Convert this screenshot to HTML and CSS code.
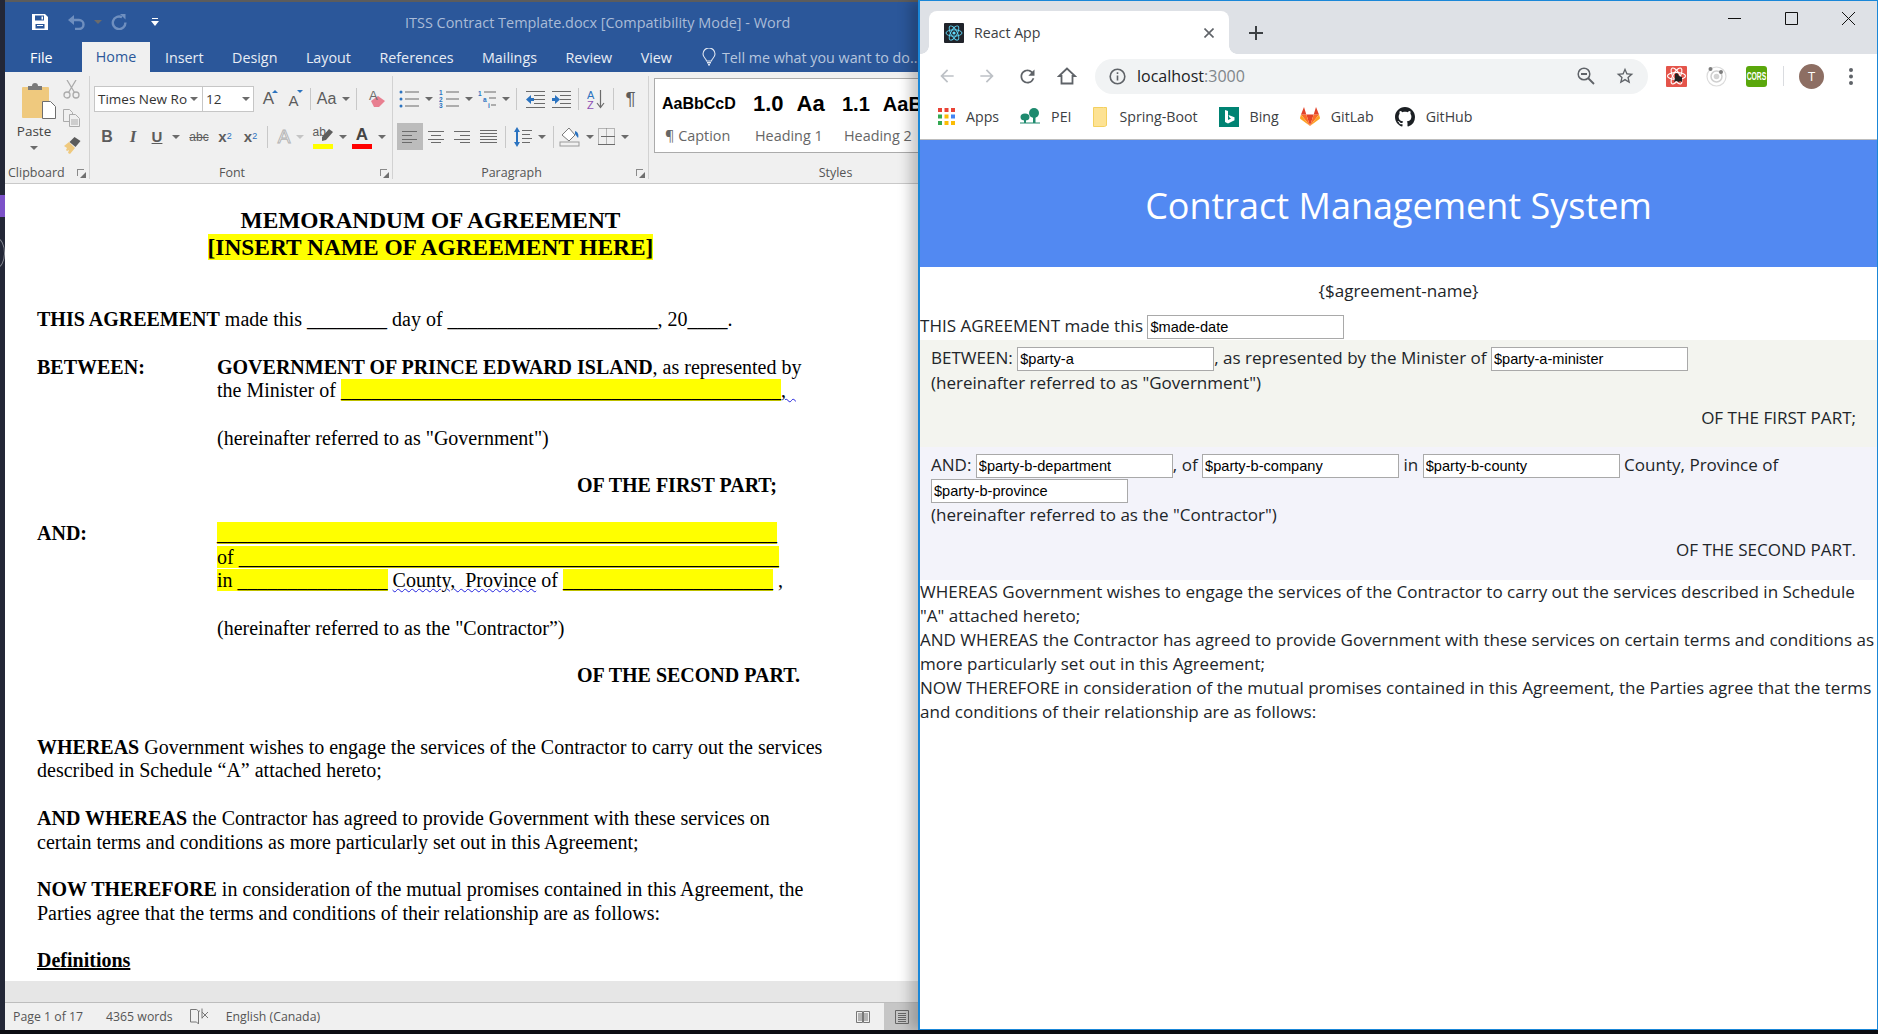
FILE: index.html
```html
<!DOCTYPE html>
<html>
  <head>
    <meta charset="UTF-8" />
    <title>Contract Management System</title>
    <link rel="stylesheet" href="styles.css">
  </head>

  <body>
    <div class="desk-mark mark-a"></div>
    <div class="desk-mark mark-b"></div>
    <div class="desk-arc"></div>

    <!-- Word window -->
    <div class="word">
      <div class="word-title">
        <div class="quick">
          <svg class="q-save" width="16" height="16" viewBox="0 0 16 16"><path fill="#fff" d="M0 0h13l3 3v13H0z"/><path fill="#2b579a" d="M3 1.5h9v5H3zM3.5 10h9v4.5h-9z"/><path fill="#fff" d="M9.5 2.5h1.5v3H9.5zM5 11h6v1H5z"/></svg>
          <svg class="q-undo" width="18" height="15" viewBox="0 0 18 15"><path fill="none" stroke="#6f8fbf" stroke-width="2.4" d="M2 5h9a4.5 4.5 0 0 1 0 9H7"/><path fill="#6f8fbf" d="M6 0v10L0 5z"/></svg>
          <span class="caret q-caret"></span>
          <svg class="q-redo" width="17" height="16" viewBox="0 0 17 16"><path fill="none" stroke="#6f8fbf" stroke-width="2.4" d="M11 3.2a6.3 6.3 0 1 0 3.4 5.3"/><path fill="#6f8fbf" d="M9 0l5.500 0v5.500z"/></svg>
          <svg class="q-more" width="8" height="9" viewBox="0 0 8 9"><path fill="#fff" d="M1 0h6v1H1zM0 3h8L4 8z"/></svg>
        </div>
        <div class="doc-name">ITSS Contract Template.docx [Compatibility Mode] - Word</div>
      </div>
      <div class="word-tabs">
        <span class="tab-file">File</span>
        <span class="tab-home">Home</span>
        <span class="wtab t-ins">Insert</span>
        <span class="wtab">Design</span>
        <span class="wtab">Layout</span>
        <span class="wtab">References</span>
        <span class="wtab">Mailings</span>
        <span class="wtab">Review</span>
        <span class="wtab">View</span>
        <svg class="bulb" width="14" height="18" viewBox="0 0 14 18"><path fill="none" stroke="#dfe6f1" stroke-width="1.100" d="M4.500 13c0-2-3.500-3.500-3.500-7a6 6 0 0 1 12 0c0 3.500-3.500 5-3.500 7z"/><path fill="#dfe6f1" d="M5 14h4v1.500H5zM6 16h2v1.500H6z"/></svg>
        <span class="tell">Tell me what you want to do...</span>
      </div>

      <div class="ribbon">
        <div class="group g-clip">
          <div class="clip-body">
            <div class="paste">
              <svg width="34" height="36" viewBox="0 0 34 36"><rect x="0" y="4" width="27" height="31" rx="1" fill="#efc97e"/><path fill="#7a7a7a" d="M6 3h4a3 3 0 0 1 6 0h4v4H6z"/><path fill="#fff" stroke="#6e6e6e" d="M20.500 18.500h8l5 5v12h-13z"/></svg>
              <span class="paste-label">Paste</span>
              <span class="caret"></span>
            </div>
            <div class="clip-tools">
              <svg width="17" height="19" viewBox="0 0 17 19"><g fill="none" stroke="#ababab" stroke-width="1.300"><circle cx="4" cy="15" r="3"/><circle cx="13" cy="15" r="3"/><path d="M5.500 12.500L13 0M11.500 12.500L4 0"/></g></svg>
              <svg width="17" height="18" viewBox="0 0 17 18"><g fill="#f0f0f0" stroke="#ababab"><path d="M.5.5h6l3 3v9H.5z"/><path d="M6.500 5.500h6l4 4v8h-10z"/></g><path stroke="#ababab" d="M8 11h7M8 13h7M8 15h7"/></svg>
              <svg width="18" height="17" viewBox="0 0 18 17"><path fill="#efc97e" d="M1 9l5-4 6 6-5 6-2-1 1-3-2 1-1-1 1-2z"/><path fill="#5b5b5b" d="M6.500 5l5-5 6 4-5 6z"/></svg>
            </div>
          </div>
          <div class="g-label l-clip">Clipboard<span class="launcher"></span></div>
        </div>

        <div class="group g-font">
          <div class="tool-row">
            <div class="combo c-face"><span class="combo-text">Times New Ro</span><span class="caret"></span></div>
            <div class="combo c-size"><span class="combo-text">12</span><span class="caret"></span></div>
            <div class="tool w25 ml2"><span class="big-a">A</span><span class="up-tip"></span></div>
            <div class="tool w25"><span class="small-a">A</span><span class="down-tip"></span></div>
            <span class="rsep"></span>
            <div class="tool w37"><span class="case">Aa</span><span class="caret"></span></div>
            <span class="rsep"></span>
            <div class="tool w32">
              <svg width="18" height="20" viewBox="0 0 18 20"><path fill="#e87f90" d="M3 12l7-5 7 5-6 6H6z"/><text x="1" y="11" font-family="'Liberation Sans',sans-serif" font-size="13" fill="#6b6b6b">A</text></svg>
            </div>
          </div>
          <div class="tool-row r2">
            <div class="tool w26 fb ml4">B</div>
            <div class="tool w26 fi">I</div>
            <div class="tool w40"><span class="fu">U</span><span class="caret"></span></div>
            <div class="tool w26 fs">abc</div>
            <div class="tool w26 fx">x<sub>2</sub></div>
            <div class="tool w25 fx">x<sup>2</sup></div>
            <span class="rsep"></span>
            <div class="tool w38"><span class="fa-glow">A</span><span class="caret pale"></span></div>
            <div class="tool w39">
              <span class="bar-letter"><span class="hl-ab">ab</span><svg class="pen" width="13" height="13" viewBox="0 0 13 13"><path fill="#5e5e5e" d="M9 0l4 3-7 8-4 1 0-4z"/></svg><span class="bar yellow"></span></span><span class="caret"></span>
            </div>
            <div class="tool w40">
              <span class="bar-letter"><span class="col-a">A</span><span class="bar red"></span></span><span class="caret"></span>
            </div>
          </div>
          <div class="g-label">Font<span class="launcher"></span></div>
        </div>

        <div class="group g-para">
          <div class="tool-row">
            <div class="tool w40 ml3">
              <svg width="20" height="18" viewBox="0 0 20 18"><g fill="#2b73c0"><circle cx="2" cy="2" r="1.500"/><circle cx="2" cy="9" r="1.500"/><circle cx="2" cy="16" r="1.500"/></g><path stroke="#6b6b6b" d="M6 2h14M6 9h14M6 16h14"/></svg><span class="caret"></span>
            </div>
            <div class="tool w39">
              <svg width="20" height="18" viewBox="0 0 20 18"><g fill="#2b73c0" font-family="'Liberation Sans',sans-serif" font-size="6.500" font-weight="700"><text x="0" y="5">1</text><text x="0" y="12">2</text><text x="0" y="18">3</text></g><path stroke="#6b6b6b" d="M7 2h13M7 9h13M7 16h13"/></svg><span class="caret"></span>
            </div>
            <div class="tool w37">
              <svg width="18" height="18" viewBox="0 0 18 18"><g fill="#2b73c0" font-family="'Liberation Sans',sans-serif" font-weight="700"><text x="0" y="6" font-size="6.500">1</text><text x="5" y="12" font-size="6.500">a</text><text x="10" y="18" font-size="6.500">i</text></g><path stroke="#6b6b6b" d="M6 2h12M11 8h7M13 15h5"/></svg><span class="caret"></span>
            </div>
            <span class="rsep"></span>
            <div class="tool w26 ml1">
              <svg width="19" height="17" viewBox="0 0 19 17"><path stroke="#6b6b6b" d="M0 .5h19M8 4.500h11M8 8.500h11M8 12.500h11M0 16.500h19"/><path fill="#2b73c0" d="M0 8.500l5-4.500v3h3v3H5v3z"/></svg>
            </div>
            <div class="tool w26">
              <svg width="19" height="17" viewBox="0 0 19 17"><path stroke="#6b6b6b" d="M0 .5h19M8 4.500h11M8 8.500h11M8 12.500h11M0 16.500h19"/><path fill="#2b73c0" d="M8 8.500L3 4v3H0v3h3v3z"/></svg>
            </div>
            <span class="rsep"></span>
            <div class="tool w26">
              <svg width="18" height="20" viewBox="0 0 18 20"><text x="0" y="9.500" font-family="'Liberation Sans',sans-serif" font-size="11" fill="#2b73c0">A</text><text x="0" y="20" font-family="'Liberation Sans',sans-serif" font-size="11" fill="#8d4fb4">Z</text><path fill="none" stroke="#6b6b6b" stroke-width="1.200" d="M13.500 1v17M10 14l3.500 4.500L17 14"/></svg>
            </div>
            <span class="rsep"></span>
            <div class="tool w25 pilcrow">¶</div>
          </div>
          <div class="tool-row r2">
            <div class="tool align on ml4"><svg width="16" height="12" viewBox="0 0 16 12"><path stroke="#6b6b6b" d="M0 .5h15M0 4.500h10M0 8.500h15M0 11.500h10"/></svg></div>
            <div class="tool align"><svg width="16" height="12" viewBox="0 0 16 12"><path stroke="#6b6b6b" d="M0 .5h16M3 4.500h10M0 8.500h16M3 11.500h10"/></svg></div>
            <div class="tool align"><svg width="16" height="12" viewBox="0 0 16 12"><path stroke="#6b6b6b" d="M0 .5h16M6 4.500h10M0 8.500h16M6 11.500h10"/></svg></div>
            <div class="tool w26"><svg width="17" height="13" viewBox="0 0 17 13"><path stroke="#6b6b6b" d="M0 .5h17M0 3.500h17M0 6.500h17M0 9.500h17M0 12.500h17"/></svg></div>
            <span class="rsep"></span>
            <div class="tool w39">
              <svg width="18" height="20" viewBox="0 0 18 20"><path fill="#2b73c0" d="M3 0l3 5H4v10h2l-3 5-3-5h2V5H0z"/><path stroke="#6b6b6b" d="M8 3.500h10M8 7.500h8M8 11.500h10M8 15.500h8"/></svg><span class="caret"></span>
            </div>
            <span class="rsep"></span>
            <div class="tool w37">
              <svg width="21" height="21" viewBox="0 0 21 21"><path fill="#fff" stroke="#7a7a7a" d="M3 9l7-7 6 7-6 6z"/><path fill="#2b73c0" d="M16 5c3 1 4 4 3 7l-3-4z"/><rect x="1" y="16" width="19" height="4" fill="#f0f0f0" stroke="#9a9a9a"/></svg><span class="caret"></span>
            </div>
            <div class="tool w37">
              <svg width="17" height="17" viewBox="0 0 17 17"><path fill="none" stroke="#7a7a7a" stroke-dasharray="1 1" d="M.5.5h16v16H.5zM8.500 .5v16"/><path stroke="#6b6b6b" d="M0 16.500h17M3 8.500h14"/></svg><span class="caret"></span>
            </div>
          </div>
          <div class="g-label">Paragraph<span class="launcher"></span></div>
        </div>

        <div class="group g-styles">
          <div class="gallery">
            <div class="style-cell s1"><div class="sample s-cap">AaBbCcD</div><div class="s-name">¶ Caption</div></div>
            <div class="style-cell s2"><div class="sample s-h1"><span>1.0</span><span>Aa</span></div><div class="s-name">Heading 1</div></div>
            <div class="style-cell s3"><div class="sample s-h2"><span>1.1</span><span>AaB</span></div><div class="s-name">Heading 2</div></div>
          </div>
          <div class="g-label">Styles</div>
        </div>
      </div>

      <div class="doc">
        <h1 class="doc-head">MEMORANDUM OF AGREEMENT<br><mark>[INSERT NAME OF AGREEMENT HERE]</mark></h1>
        <p class="para first"><b>THIS AGREEMENT</b> made this ________ day of _____________________, 20____.</p>
        <div class="para clause">
          <b>BETWEEN:</b>
          <div><b>GOVERNMENT OF PRINCE EDWARD ISLAND</b>, as represented by<br>the Minister of <mark>____________________________________________</mark><span class="wavy">,&nbsp;&nbsp;</span></div>
        </div>
        <div class="para clause"><span></span><div>(hereinafter referred to as "Government")</div></div>
        <p class="para part"><b>OF THE FIRST PART;</b></p>
        <div class="para clause">
          <b>AND:</b>
          <div><mark>________________________________________________________</mark><br><mark>of ______________________________________________________</mark><br><mark>in _______________</mark> <span class="squig">County,  Province</span> of <mark>_____________________</mark> ,</div>
        </div>
        <div class="para clause"><span></span><div>(hereinafter referred to as the "Contractor”)</div></div>
        <p class="para part gap"><b>OF THE SECOND PART.</b></p>
        <p class="para"><b>WHEREAS</b> Government wishes to engage the services of the Contractor to carry out the services<br>described in Schedule “A” attached hereto;</p>
        <p class="para"><b>AND WHEREAS</b> the Contractor has agreed to provide Government with these services on<br>certain terms and conditions as more particularly set out in this Agreement;</p>
        <p class="para"><b>NOW THEREFORE</b> in consideration of the mutual promises contained in this Agreement, the<br>Parties agree that the terms and conditions of their relationship are as follows:</p>
        <p class="para"><b class="defs">Definitions</b></p>
      </div>

      <div class="doc-foot"></div>

      <div class="status">
        <span class="st-page">Page 1 of 17</span>
        <span class="st-words">4365 words</span>
        <svg class="st-book" width="18" height="17" viewBox="0 0 18 17"><path fill="none" stroke="#777" d="M.5 1.500h6l2 1.500v13l-2-2h-6zM9 3h1M12 .5v10M12 4l3 3 3-3M12 4l6 6M18 4l-6 6"/></svg>
        <span class="st-lang">English (Canada)</span>
        <svg class="st-read" width="14" height="14" viewBox="0 0 14 14"><path fill="none" stroke="#777" d="M.5 1.500h6v11h-6zM7.500 1.500h6v11h-6z"/><path stroke="#777" d="M2 4h4M2 6h4M2 8h4M2 10h4M8 4h4M8 6h4M8 8h4M8 10h4"/></svg>
        <span class="st-print"><svg width="14" height="14" viewBox="0 0 14 14"><path fill="none" stroke="#666" d="M.5 .5h13v13H.5z"/><path stroke="#666" d="M3 3.500h8M3 5.500h8M3 7.500h8M3 9.500h8M3 11.500h8"/></svg></span>
      </div>
    </div>

    <!-- Chrome window -->
    <div class="chrome">
      <div class="tabstrip">
        <div class="tab">
          <svg class="favicon" width="20" height="20" viewBox="0 0 20 20"><rect width="20" height="20" rx="1" fill="#20232a"/><g fill="none" stroke="#61dafb" stroke-width=".9"><ellipse cx="10" cy="10" rx="8" ry="3.200"/><ellipse cx="10" cy="10" rx="8" ry="3.200" transform="rotate(60 10 10)"/><ellipse cx="10" cy="10" rx="8" ry="3.200" transform="rotate(120 10 10)"/></g><circle cx="10" cy="10" r="1.600" fill="#61dafb"/></svg>
          <span class="tab-title">React App</span>
          <svg class="tab-x" width="10" height="10" viewBox="0 0 10 10"><path stroke="#5f6368" stroke-width="1.600" d="M.5.5l9 9M9.500.5l-9 9"/></svg>
        </div>
        <svg class="tab-new" width="14" height="14" viewBox="0 0 14 14"><path stroke="#3c4043" stroke-width="2" d="M7 0v14M0 7h14"/></svg>
        <div class="win-btns">
          <span class="win-btn"><svg width="14" height="14" viewBox="0 0 14 14"><path stroke="#111" d="M0 6.500h13"/></svg></span>
          <span class="win-btn"><svg width="14" height="14" viewBox="0 0 14 14"><path fill="none" stroke="#111" d="M.5.500h12v12H.5z"/></svg></span>
          <span class="win-btn"><svg width="14" height="14" viewBox="0 0 14 14"><path stroke="#111" d="M0 0l13 13M13 0L0 13"/></svg></span>
        </div>
      </div>

      <div class="toolbar">
        <span class="nav first-nav"><svg width="20" height="20" viewBox="0 0 24 24"><path fill="#bdc1c6" d="M20 11H7.830l5.590-5.590L12 4l-8 8 8 8 1.410-1.410L7.830 13H20z"/></svg></span>
        <span class="nav"><svg width="20" height="20" viewBox="0 0 24 24"><path fill="#bdc1c6" d="M12 4l-1.410 1.410L16.170 11H4v2h12.170l-5.580 5.590L12 20l8-8z"/></svg></span>
        <span class="nav"><svg width="21" height="21" viewBox="0 0 24 24"><path fill="#5f6368" d="M17.650 6.350A7.958 7.958 0 0 0 12 4c-4.420 0-7.990 3.580-7.990 8s3.570 8 7.990 8c3.730 0 6.840-2.550 7.730-6h-2.080A5.990 5.990 0 0 1 12 18c-3.310 0-6-2.690-6-6s2.690-6 6-6c1.660 0 3.140.69 4.220 1.780L13 11h7V4l-2.350 2.350z"/></svg></span>
        <span class="nav"><svg width="20" height="20" viewBox="0 0 20 20"><path fill="none" stroke="#5f6368" stroke-width="1.800" d="M10 2.500L2 10h2.500v7.500h11V10H18z"/></svg></span>
        <div class="omni">
          <svg class="omni-info" width="17" height="17" viewBox="0 0 17 17"><circle cx="8.500" cy="8.500" r="7.300" fill="none" stroke="#5f6368" stroke-width="1.600"/><path fill="#5f6368" d="M7.700 7.500h1.600v5H7.700zM7.700 4.300h1.600V6H7.700z"/></svg>
          <span class="omni-url">localhost<span class="port">:3000</span></span>
          <svg class="omni-zoom" width="18" height="18" viewBox="0 0 18 18"><circle cx="7" cy="7" r="5.800" fill="none" stroke="#5f6368" stroke-width="1.500"/><path stroke="#5f6368" stroke-width="1.800" d="M11 11l6 6M4 7h6"/></svg>
          <svg class="omni-star" width="20" height="20" viewBox="0 0 24 24"><path fill="#5f6368" d="M22 9.240l-7.190-.62L12 2 9.190 8.630 2 9.240l5.460 4.730L5.820 21 12 17.270 18.180 21l-1.630-7.030L22 9.240zM12 15.400l-3.760 2.270 1-4.280-3.320-2.880 4.380-.38L12 6.100l1.710 4.040 4.380.38-3.320 2.880 1 4.280L12 15.400z"/></svg>
        </div>
        <span class="ext ext-first"><svg width="21" height="21" viewBox="0 0 21 21"><rect width="21" height="21" rx="1" fill="#e4544a"/><g fill="none" stroke="#fff" stroke-width="1.100"><ellipse cx="10.500" cy="10" rx="9" ry="3.500"/><ellipse cx="10.500" cy="10" rx="9" ry="3.500" transform="rotate(60 10.500 10)"/><ellipse cx="10.500" cy="10" rx="9" ry="3.500" transform="rotate(120 10.500 10)"/></g><path fill="#222" d="M9 8a2 2 0 0 1 3 0l1 2 3 1v5l-2-1-1 1-3-1-2 1 1-4z"/></svg></span>
        <span class="ext"><svg width="21" height="21" viewBox="0 0 21 21"><g fill="none"><circle cx="10.500" cy="10.500" r="9.500" stroke="#dcdcdc" stroke-width="1.200"/><circle cx="10.500" cy="10.500" r="5.500" stroke="#d0d0d0" stroke-width="1.500"/></g><circle cx="10.500" cy="10.500" r="2.800" fill="#d4d4d4"/><circle cx="4.500" cy="3" r="2" fill="#7d7d7d"/><circle cx="15" cy="6" r="2" fill="#7d7d7d"/></svg></span>
        <span class="ext"><span class="cors"><span class="cors-text">CORS</span></span></span>
        <span class="tool-sep"></span>
        <span class="avatar">T</span>
        <svg class="dots" width="4" height="18" viewBox="0 0 4 18"><g fill="#5f6368"><circle cx="2" cy="3" r="2"/><circle cx="2" cy="9.500" r="2"/><circle cx="2" cy="16" r="2"/></g></svg>
      </div>

      <div class="bookmarks">
        <span class="bm">
          <svg width="17" height="17" viewBox="0 0 17 17"><g fill="#ea4335"><rect width="4" height="4"/><rect x="6.500" width="4" height="4"/><rect x="13" width="4" height="4"/></g><g fill="#34a853"><rect y="6.500" width="4" height="4"/></g><rect x="6.500" y="6.500" width="4" height="4" fill="#fbbc04"/><rect x="13" y="6.500" width="4" height="4" fill="#4285f4"/><rect y="13" width="4" height="4" fill="#34a853"/><rect x="6.500" y="13" width="4" height="4" fill="#fbbc04"/><rect x="13" y="13" width="4" height="4" fill="#fbbc04"/></svg>
          Apps
        </span>
        <span class="bm">
          <svg width="20" height="17" viewBox="0 0 20 17"><g fill="#1e8a6e"><circle cx="14" cy="5" r="5"/><rect x="13" y="8" width="2.500" height="7"/><ellipse cx="5" cy="9" rx="4.500" ry="3.500"/><rect x="4" y="11" width="2" height="4"/><rect y="14" width="20" height="2" opacity=".5"/></g></svg>
          PEI
        </span>
        <span class="bm">
          <svg width="16" height="20" viewBox="0 0 16 20"><path fill="#fde293" stroke="#f3d060" d="M1.500.5h10l3 0v18l-2 1h-11z"/></svg>
          Spring-Boot
        </span>
        <span class="bm">
          <svg width="20" height="20" viewBox="0 0 20 20"><rect width="20" height="20" fill="#008373"/><path fill="#fff" d="M6 3l3 1v9l3-1.600-1.500-.8-1-2.600 6 2.200v3L9 16.500l-3-1.500z"/></svg>
          Bing
        </span>
        <span class="bm">
          <svg width="20" height="19" viewBox="0 0 20 19"><path fill="#e24329" d="M10 19l3.700-11.500H6.300z"/><path fill="#fc6d26" d="M10 19L6.300 7.500H1zM10 19l3.700-11.500H19z"/><path fill="#fca326" d="M1 7.500L0 11c0 .5.200.8.500 1L10 19zM19 7.500l1 3.500c0 .5-.2.8-.5 1L10 19z"/><path fill="#e24329" d="M1 7.500h5.300L4 0zM19 7.500h-5.300L16 0z"/></svg>
          GitLab
        </span>
        <span class="bm">
          <svg width="20" height="20" viewBox="0 0 16 16"><path fill="#1b1f23" d="M8 0C3.580 0 0 3.580 0 8c0 3.540 2.290 6.530 5.470 7.590.4.070.55-.17.55-.38 0-.19-.01-.82-.01-1.490-2.010.37-2.530-.49-2.690-.94-.09-.23-.48-.94-.82-1.130-.28-.15-.68-.52-.01-.53.63-.01 1.080.58 1.230.82.72 1.210 1.870.87 2.330.66.07-.52.28-.87.51-1.070-1.780-.2-3.640-.89-3.640-3.950 0-.87.31-1.590.82-2.150-.08-.2-.36-1.020.08-2.120 0 0 .67-.21 2.200.82.64-.18 1.320-.27 2-.27.68 0 1.360.09 2 .27 1.530-1.040 2.200-.82 2.200-.82.44 1.100.16 1.920.08 2.120.51.56.82 1.270.82 2.150 0 3.070-1.870 3.750-3.650 3.950.29.25.54.73.54 1.480 0 1.070-.01 1.930-.01 2.200 0 .21.15.46.55.38A8.013 8.013 0 0 0 16 8c0-4.420-3.580-8-8-8z"/></svg>
          GitHub
        </span>
      </div>

      <div class="app">
        <header class="app-header">Contract Management System</header>
        <div class="agreement-name">{$agreement-name}</div>
        <div class="made">THIS AGREEMENT made this <input class="field" value="$made-date"></div>
        <section class="party party-a">
          <div class="line">BETWEEN: <input class="field" value="$party-a">, as represented by the Minister of <input class="field" value="$party-a-minister"></div>
          <div class="refer">(hereinafter referred to as "Government")</div>
          <p class="part-end">OF THE FIRST PART;</p>
        </section>
        <section class="party party-b">
          <div class="line">AND: <input class="field" value="$party-b-department">, of <input class="field" value="$party-b-company"> in <input class="field" value="$party-b-county"> County, Province of</div>
          <div class="line second"><input class="field" value="$party-b-province"></div>
          <div class="refer">(hereinafter referred to as the "Contractor")</div>
          <p class="part-end">OF THE SECOND PART.</p>
        </section>
        <div class="recitals">
          WHEREAS Government wishes to engage the services of the Contractor to carry out the services described in Schedule<br>
          "A" attached hereto;<br>
          AND WHEREAS the Contractor has agreed to provide Government with these services on certain terms and conditions as<br>
          more particularly set out in this Agreement;<br>
          NOW THEREFORE in consideration of the mutual promises contained in this Agreement, the Parties agree that the terms<br>
          and conditions of their relationship are as follows:
        </div>
      </div>
    </div>
  </body>
</html>
```

FILE: styles.css
```css
html,
body {
  margin: 0;
  padding: 0;
  height: 100%;
}

body {
  position: relative;
  width: 1878px;
  height: 1034px;
  overflow: hidden;
  background: #0c0d12;
  font-family: "Open Sans", sans-serif;
}

.desk-mark {
  position: absolute;
  left: 0;
  width: 5px;
  background: #232737;
}

.mark-a {
  top: 0;
  height: 195px;
}

.mark-b {
  top: 195px;
  height: 835px;
  background: linear-gradient(#7c52c8 0 22px, #232737 22px);
}

.desk-arc {
  position: absolute;
  left: -14px;
  top: 238px;
  width: 14px;
  height: 28px;
  border: 1px solid #8a8d96;
  border-radius: 50%;
  transform: translateX(3px);
}

/* word */
.word {
  position: absolute;
  left: 5px;
  top: 0;
  width: 914px;
  height: 1030px;
  border-top: 2px solid #5c5c5c;
  box-sizing: border-box;
  display: flex;
  flex-direction: column;
  overflow: hidden;
}

.word-title {
  height: 40px;
  background: #2b579a;
  display: flex;
  align-items: center;
  flex: none;
}

.quick {
  width: 400px;
  display: flex;
  align-items: center;
  flex: none;
}

.q-save {
  margin-left: 27px;
}

.q-undo {
  margin-left: 20px;
}

.q-caret {
  margin-left: 8px;
  border-top-color: #6f8fbf;
}

.q-redo {
  margin-left: 9px;
}

.q-more {
  margin-left: 23px;
}

.doc-name {
  color: #aabcd8;
  font-size: 14.45px;
  white-space: nowrap;
}

.word-tabs {
  height: 30px;
  background: #2b579a;
  display: flex;
  align-items: center;
  color: #e8edf5;
  font-size: 14.3px;
  flex: none;
  white-space: nowrap;
}

.word-tabs > * {
  flex: none;
}

.tab-file {
  margin-left: 25px;
  width: 52px;
  color: #fff;
}

.tab-home {
  width: 68px;
  height: 30px;
  line-height: 30px;
  text-align: center;
  background: #f0f0f0;
  color: #2b579a;
}

.wtab {
  margin-left: 28.5px;
}

.t-ins {
  margin-left: 15px;
}

.bulb {
  margin-left: 30px;
}

.tell {
  margin-left: 6px;
  color: #b7c6de;
}

.ribbon {
  height: 111px;
  background: #f0f0f0;
  border-bottom: 1px solid #c9c9c9;
  display: flex;
  flex: none;
}

.group {
  position: relative;
  height: 103px;
  margin-top: 4px;
  border-right: 1px solid #d2d2d2;
  flex: none;
}

.g-clip {
  width: 84px;
}

.g-font {
  width: 302px;
}

.g-para {
  width: 255px;
}

.g-styles {
  width: 269px;
  border-right: none;
}

.g-label {
  position: absolute;
  left: 0;
  right: 0;
  bottom: -4px;
  height: 20px;
  padding-right: 18px;
  line-height: 20px;
  text-align: center;
  font-size: 12.5px;
  color: #555;
}

.g-styles .g-label {
  padding: 0 0 0 104px;
}

.l-clip {
  padding-right: 0;
  text-align: left;
  padding-left: 3px;
}

.launcher {
  position: absolute;
  right: 5px;
  top: 6px;
  width: 6px;
  height: 6px;
  border: 1px solid #8a8a8a;
  border-width: 1px 0 0 1px;
}

.launcher::after {
  content: "";
  position: absolute;
  right: -2px;
  bottom: -2px;
  border: 3px solid transparent;
  border-right-color: #6f6f6f;
  border-bottom-color: #6f6f6f;
}

.caret {
  display: inline-block;
  width: 0;
  height: 0;
  border: 4px solid transparent;
  border-top: 4px solid #6b6b6b;
  border-bottom: 0;
  flex: none;
}

.caret.pale {
  border-top-color: #c4c4c4;
}

/* clipboard */
.clip-body {
  display: flex;
}

.paste {
  width: 52px;
  margin-left: 3px;
  padding-top: 7px;
  display: flex;
  flex-direction: column;
  align-items: center;
  font-size: 13.5px;
  color: #444;
}

.paste svg {
  margin-left: 9px;
}

.paste-label {
  margin-top: 1px;
  height: 26px;
  line-height: 22px;
}

.clip-tools {
  padding-top: 4px;
  margin-left: 3px;
  display: flex;
  flex-direction: column;
  gap: 10px;
}

/* tools */
.tool-row {
  display: flex;
  align-items: center;
  height: 26px;
  margin-top: 10px;
}

.r2 {
  height: 27px;
  margin-top: 11px;
}

.combo {
  height: 26px;
  box-sizing: border-box;
  background: #fff;
  border: 1px solid #c6c6c6;
  display: flex;
  align-items: center;
  flex: none;
  font-size: 13.5px;
  color: #333;
  white-space: nowrap;
  overflow: hidden;
}

.c-face {
  width: 108px;
  margin-left: 4px;
  border-right: none;
}

.c-face .combo-text {
  width: 90px;
  padding-left: 3px;
}

.c-face .caret {
  margin-left: 2px;
}

.c-size {
  width: 52px;
}

.c-size .combo-text {
  width: 36px;
  padding-left: 3px;
}

.tool {
  height: 100%;
  display: flex;
  align-items: center;
  justify-content: center;
  gap: 6px;
  flex: none;
  box-sizing: border-box;
  position: relative;
  color: #5c5c5c;
  font-family: "Liberation Sans", sans-serif;
}

.w25 { width: 25px; }
.w26 { width: 26px; }
.w32 { width: 32px; }
.w37 { width: 37px; }
.w38 { width: 38px; }
.w39 { width: 39px; }
.w40 { width: 40px; }
.ml1 { margin-left: 1px; }
.ml2 { margin-left: 2px; }
.ml3 { margin-left: 3px; }
.ml4 { margin-left: 4px; }

.rsep {
  width: 1px;
  height: 22px;
  margin: 0 4px;
  background: #c8c8c8;
  flex: none;
}

.big-a {
  font-size: 17px;
}

.small-a {
  font-size: 15px;
  padding-top: 3px;
}

.up-tip,
.down-tip {
  position: absolute;
  right: 3px;
  top: 4px;
  border: 3px solid transparent;
  border-bottom: 3px solid #2b73c0;
  border-top: 0;
}

.down-tip {
  border-bottom: 0;
  border-top: 3px solid #2b73c0;
}

.case {
  font-size: 16px;
}

.fb {
  font-weight: bold;
  font-size: 16px;
}

.fi {
  font-style: italic;
  font-family: "Liberation Serif", serif;
  font-weight: bold;
  font-size: 17px;
}

.fu {
  margin-right: 4px;
  font-weight: bold;
  font-size: 15px;
  text-decoration: underline;
}

.fs {
  font-size: 12px;
  text-decoration: line-through;
}

.fx {
  font-weight: bold;
  font-size: 15px;
  padding-bottom: 1px;
  gap: 0;
}

.fx sub,
.fx sup {
  color: #2b73c0;
  font-size: 9px;
  font-weight: normal;
}

.fa-glow {
  font-size: 19px;
  color: #fff;
  -webkit-text-stroke: 1px #b4b4b4;
}

.bar-letter {
  position: relative;
  width: 20px;
  height: 24px;
  display: block;
  text-align: center;
}

.hl-ab {
  position: absolute;
  left: 0;
  top: 0;
  font-size: 12px;
}

.pen {
  position: absolute;
  right: 0;
  top: 4px;
}

.col-a {
  font-size: 17px;
  font-weight: bold;
  line-height: 19px;
  color: #444;
}

.bar {
  position: absolute;
  left: 0;
  bottom: 0;
  width: 20px;
  height: 5px;
}

.yellow {
  background: #ff0;
}

.red {
  background: #f00;
}

.pilcrow {
  font-size: 19px;
}

.align {
  width: 26px;
}

.align.on {
  background: #bcbcbc;
}

/* styles gallery */
.gallery {
  margin: 2px 0 0 5px;
  width: 264px;
  height: 75px;
  box-sizing: border-box;
  background: #fff;
  border: 1px solid #ababab;
  border-right: none;
  display: flex;
  overflow: hidden;
  font-family: "Liberation Sans", sans-serif;
  white-space: nowrap;
}

.style-cell {
  flex: none;
  box-sizing: border-box;
}

.s1 {
  width: 90px;
  padding-left: 7px;
}

.s2 {
  width: 89px;
  padding-left: 8px;
}

.s3 {
  width: 84px;
  padding-left: 8px;
}

.sample {
  height: 40px;
  line-height: 50px;
  font-weight: bold;
  color: #000;
  display: flex;
  gap: 13px;
}

.s-cap {
  font-size: 16px;
}

.s-h1 {
  font-size: 22px;
}

.s-h2 {
  font-size: 20px;
}

.s-name {
  margin-top: 7px;
  padding-left: 3px;
  font-family: "Open Sans", sans-serif;
  font-size: 14.4px;
  color: #666;
}

.s2 .s-name,
.s3 .s-name {
  padding-left: 2px;
}

/* document */
.doc {
  height: 797px;
  flex: none;
  box-sizing: border-box;
  background: #fff;
  padding: 23px 0 0 32px;
  overflow: hidden;
  font-family: "Liberation Serif", serif;
  font-size: 20px;
  line-height: 23.75px;
  color: #000;
  white-space: nowrap;
}

.doc mark {
  background: #ff0;
  color: inherit;
}

.doc-head {
  margin: 0 0 47.5px;
  width: 787px;
  text-align: center;
  font-size: 23.4px;
  line-height: 26.8px;
  font-weight: bold;
}

.para {
  margin: 0 0 23.75px;
}

.clause {
  display: grid;
  grid-template-columns: 180px 1fr;
}

.part {
  padding-left: 540px;
}

.gap {
  margin-bottom: 47.5px;
}

.wavy {
  text-decoration: underline wavy #2222dd 1px;
}

.squig {
  white-space: pre;
  text-decoration: underline wavy #2222dd 1px;
}

.defs {
  text-decoration: underline;
}

.doc-foot {
  height: 21px;
  background: #e6e6e6;
  flex: none;
}

.status {
  flex: 1;
  background: #f0f0f0;
  border-top: 1px solid #bdbdbd;
  display: flex;
  align-items: center;
  position: relative;
  font-size: 12.3px;
  color: #555;
}

.st-page {
  margin-left: 8px;
}

.st-words {
  margin-left: 23px;
}

.st-book {
  margin-left: 17px;
}

.st-lang {
  margin-left: 18px;
}

.st-read {
  margin-left: auto;
  margin-right: 14px;
}

.st-print {
  width: 35px;
  height: 100%;
  background: #c6c6c6;
  display: flex;
  align-items: center;
  justify-content: center;
}

/* chrome */
.chrome {
  position: absolute;
  left: 918px;
  top: 0;
  width: 960px;
  height: 1030px;
  box-sizing: border-box;
  border: 1px solid #1a87d8;
  border-left-width: 2px;
  background: #fff;
  box-shadow: -8px 0 12px rgba(0, 0, 0, 0.22);
  display: flex;
  flex-direction: column;
  overflow: hidden;
}

.tabstrip {
  height: 53px;
  background: #dee1e6;
  display: flex;
  flex: none;
}

.tab {
  position: relative;
  width: 300px;
  height: 43px;
  margin: 10px 0 0 9px;
  padding: 0 15px;
  box-sizing: border-box;
  background: #fff;
  border-radius: 8px 8px 0 0;
  display: flex;
  align-items: center;
  flex: none;
}

.tab::before,
.tab::after {
  content: "";
  position: absolute;
  bottom: 0;
  width: 8px;
  height: 8px;
}

.tab::before {
  left: -8px;
  background: radial-gradient(circle at 0 0, #dee1e6 7.500px, #fff 8px);
}

.tab::after {
  right: -8px;
  background: radial-gradient(circle at 100% 0, #dee1e6 7.500px, #fff 8px);
}

.tab-title {
  margin-left: 10px;
  font-size: 14.2px;
  color: #3c4043;
}

.tab-x {
  margin-left: auto;
}

.tab-new {
  margin: 25px 0 0 20px;
}

.win-btns {
  margin-left: auto;
  display: flex;
}

.win-btn {
  width: 57px;
  height: 36px;
  display: flex;
  align-items: center;
  justify-content: center;
}

.toolbar {
  height: 46px;
  padding-bottom: 2px;
  box-sizing: border-box;
  display: flex;
  align-items: center;
  flex: none;
}

.nav {
  width: 40px;
  display: flex;
  justify-content: center;
  flex: none;
}

.first-nav {
  margin-left: 7px;
}

.omni {
  width: 553px;
  height: 35px;
  margin-left: 8px;
  border-radius: 18px;
  background: #f1f3f4;
  display: flex;
  align-items: center;
  flex: none;
  box-sizing: border-box;
  padding-left: 14px;
}

.omni-url {
  margin-left: 11px;
  font-size: 16px;
  color: #202124;
}

.port {
  color: #80868b;
}

.omni-zoom {
  margin-left: auto;
}

.omni-star {
  margin-left: 20px;
  margin-right: 13px;
}

.ext {
  width: 40px;
  display: flex;
  justify-content: center;
  flex: none;
}

.ext-first {
  margin-left: 8px;
}

.cors {
  width: 21px;
  height: 21px;
  background: #5aa70b;
  border-radius: 3px;
  display: flex;
  justify-content: center;
  overflow: hidden;
}

.cors-text {
  transform: scaleX(0.68);
  color: #fff;
  font-family: "Liberation Sans", sans-serif;
  font-size: 10px;
  font-weight: bold;
  line-height: 21px;
}

.tool-sep {
  width: 1px;
  height: 20px;
  margin-left: 7px;
  background: #dadce0;
  flex: none;
}

.avatar {
  width: 25px;
  height: 25px;
  margin-left: 15px;
  border-radius: 50%;
  background: #8d6e63;
  color: #fff;
  font-size: 13px;
  line-height: 25px;
  text-align: center;
  flex: none;
}

.dots {
  margin-left: 25px;
}

.bookmarks {
  height: 40px;
  padding: 0 0 6px 18px;
  box-sizing: border-box;
  border-bottom: 1px solid #bdbdbd;
  display: flex;
  align-items: center;
  gap: 21px;
  flex: none;
  font-size: 14.2px;
  color: #3c4043;
}

.bm {
  display: flex;
  align-items: center;
  gap: 11px;
}

.app {
  flex: 1;
  font-size: 17.05px;
  line-height: 24px;
  color: #212529;
  overflow: hidden;
}

.app-header {
  height: 127px;
  padding-top: 42px;
  box-sizing: border-box;
  background: #5289f2;
  color: #fff;
  font-size: 36px;
  line-height: 48px;
  text-align: center;
}

.agreement-name {
  margin-top: 12px;
  text-align: center;
}

.made {
  margin-top: 11px;
  height: 26px;
  white-space: nowrap;
}

.field {
  width: 197px;
  height: 24px;
  box-sizing: border-box;
  padding: 1px 2px;
  border: 1px solid #a9a9a9;
  font-family: "Liberation Sans", sans-serif;
  font-size: 14.6px;
  color: #000;
  vertical-align: baseline;
}

.party {
  padding: 6px 21px 0 11px;
  white-space: nowrap;
}

.party-a {
  height: 107px;
  background: #f3f4ef;
  box-sizing: border-box;
}

.party-b {
  height: 133px;
  background: #f3f3fa;
  box-sizing: border-box;
}

.line {
  height: 25px;
}

.refer {
  height: 24px;
}

.part-end {
  margin: 11px 0 0;
  text-align: right;
}

.recitals {
  white-space: nowrap;
}
```
